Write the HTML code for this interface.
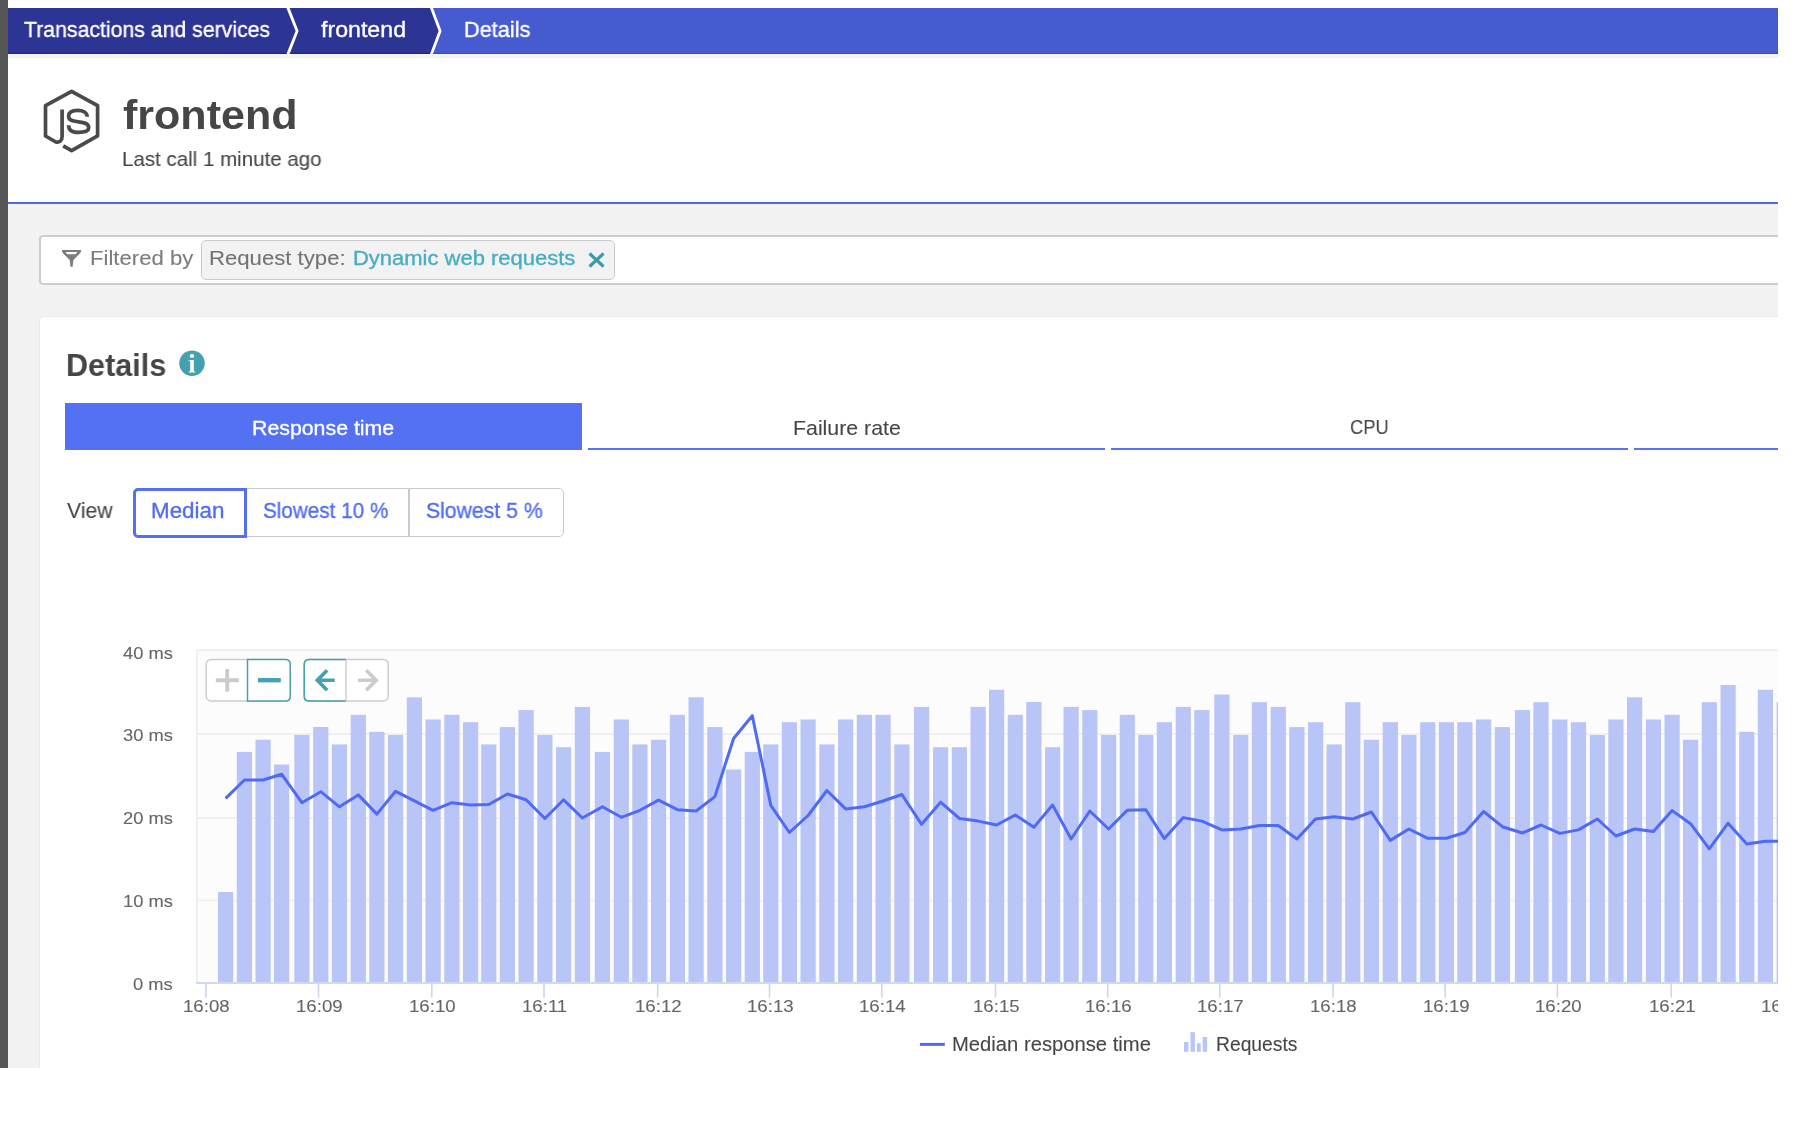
<!DOCTYPE html>
<html><head><meta charset="utf-8"><title>frontend - Details</title>
<style>
html,body{margin:0;padding:0;background:#fff;}
#root{position:relative;width:1800px;height:1142px;overflow:hidden;background:#fff;font-family:"Liberation Sans", sans-serif;}
#clip{position:absolute;left:0;top:0;width:1778px;height:1068px;overflow:hidden;background:#fff;}
.abs{position:absolute;}
.t{position:absolute;white-space:nowrap;font-family:"Liberation Sans", sans-serif;transform-origin:0 0;will-change:transform;-webkit-text-stroke-width:0.35px;}
.r{text-align:right;}
.c{text-align:center;}
</style></head><body><div id="root"><div id="clip">
<div class="abs" style="left:0;top:0;width:8px;height:1068px;background:#555;z-index:5"></div>
<svg class="abs" style="left:0;top:0" width="1800" height="60" viewBox="0 0 1800 60">
<polygon points="8,8 286.4,8 295.6,31 286.4,54 8,54" fill="#2d3594"/>
<polygon points="289.6,8 430,8 438.6,31 430,54 289.6,54 298.6,31" fill="#2d3594"/>
<polygon points="433,8 1800,8 1800,54 433,54 441.6,31" fill="#465bd0"/>
<path d="M8,53.5 L286.6,53.5 M289.8,53.5 L430.2,53.5" stroke="#1e2689" stroke-width="1.2"/>
<path d="M433.2,53.5 L1800,53.5" stroke="#3447cc" stroke-width="1.2"/>
</svg>
<div class="t" style="left:23.80px;top:18.54px;font-size:22.2px;line-height:22.2px;color:#fff;font-weight:400;transform:scaleX(0.9580);">Transactions and services</div><div class="t" style="left:321.20px;top:18.54px;font-size:22.2px;line-height:22.2px;color:#fff;font-weight:400;transform:scaleX(1.0444);">frontend</div><div class="t" style="left:464.22px;top:18.54px;font-size:22.2px;line-height:22.2px;color:#fff;font-weight:400;transform:scaleX(0.9791);">Details</div><div class="abs" style="left:8px;top:54px;width:1800px;height:4px;background:linear-gradient(#f6f6f6,#f1f1f1)"></div>
<svg class="abs" style="left:38px;top:84px" width="68" height="74" viewBox="38 84 68 74">
<path d="M62.1,109.6 L62.1,136.5 C62.1,140.8 59.5,142.8 55.8,142 L45.5,136 L45.5,105.7 L71.6,91.3 L97.6,105.7 L97.6,135.8 L71.6,150.6 L63.2,145.9" fill="none" stroke="#4a4a4a" stroke-width="3.7" stroke-linejoin="round"/>
<path d="M87.2,116.8 C87.2,112.5 83,110.4 77.8,110.4 C72.5,110.4 68.6,112.2 68.6,116.3 C68.6,120.5 73,121 78.5,121.8 C84.5,122.6 88.7,123.5 88.7,127.8 C88.7,131.6 84,132.4 78.3,132.4 C72,132.4 68.6,130.5 68.6,125.2" fill="none" stroke="#4a4a4a" stroke-width="3.7"/>
</svg>
<div class="t" style="left:122.80px;top:95.36px;font-size:41px;line-height:41px;color:#454646;font-weight:700;transform:scaleX(1.0497);-webkit-text-stroke-width:0;">frontend</div><div class="t" style="left:121.81px;top:149.21px;font-size:20.7px;line-height:20.7px;color:#454646;font-weight:400;transform:scaleX(0.9915);-webkit-text-stroke-width:0.1px;">Last call 1 minute ago</div><div class="abs" style="left:8px;top:204px;width:1800px;height:900px;background:#f2f2f2"></div>
<div class="abs" style="left:8px;top:202px;width:1800px;height:2px;background:#5568d8"></div>
<div class="abs" style="left:39px;top:235px;width:1800px;height:50px;box-sizing:border-box;border:2px solid #cdcdcd;border-radius:4px;background:#fff"></div>
<svg class="abs" style="left:60px;top:248px" width="24" height="22" viewBox="60 248 24 22">
<path d="M62,250 L81,250 L81,251.6 C80.3,253.6 75.5,257.8 73.8,259.6 C73.1,261 72.9,264.5 72.8,266.2 Q71.6,267.8 70.4,266.2 C70.3,264.5 70.1,261 69.4,259.6 C67.7,257.8 62.7,253.6 62,251.6 Z" fill="#7d7d7d"/>
<path d="M65.8,252.1 L77.1,252.1 C76.7,253.4 76,254.3 75,254.3 L67.9,254.3 C66.9,254.3 66.2,253.4 65.8,252.1 Z" fill="#fff"/>
</svg>
<div class="t" style="left:90.42px;top:248.48px;font-size:20.5px;line-height:20.5px;color:#7b7b7b;font-weight:400;transform:scaleX(1.0789);-webkit-text-stroke-width:0.1px;">Filtered by</div><div class="abs" style="left:201px;top:240px;width:413.5px;height:39.5px;box-sizing:border-box;border:1.5px solid #c9c9c9;border-radius:5px;background:#f2f2f2"></div>
<div class="t" style="left:208.82px;top:248.48px;font-size:20.5px;line-height:20.5px;color:#737373;font-weight:400;transform:scaleX(1.0798);-webkit-text-stroke-width:0.1px;">Request type:</div><div class="t" style="left:352.53px;top:248.48px;font-size:20.5px;line-height:20.5px;color:#47adc4;font-weight:400;transform:scaleX(1.0718);">Dynamic web requests</div><svg class="abs" style="left:585px;top:250px" width="22" height="20" viewBox="585 250 22 20">
<path d="M589.5,253.5 L603.5,266.5 M603.5,253.5 L589.5,266.5" stroke="#3a9bab" stroke-width="3.2" fill="none"/>
</svg>
<div class="abs" style="left:39px;top:316px;width:1800px;height:900px;box-sizing:border-box;border:1.5px solid #e8e8e8;border-radius:4px;background:#fff"></div>
<div class="t" style="left:66.14px;top:348.56px;font-size:32px;line-height:32px;color:#454646;font-weight:700;transform:scaleX(0.9553);-webkit-text-stroke-width:0;">Details</div><svg class="abs" style="left:176px;top:347px" width="32" height="32" viewBox="176 347 32 32">
<circle cx="192" cy="363.3" r="12.75" fill="#45a1b1"/>
<circle cx="192" cy="356" r="2.1" fill="#fff"/>
<path d="M188.6,360 L193.8,360 L193.8,370.3 Q194.2,371.5 195.8,372.6 L188.2,372.6 Q189.8,371.5 190.2,370.3 L190.2,361.8 Q190,360.7 188.6,360.4 Z" fill="#fff"/>
</svg>
<div class="abs" style="left:65px;top:403px;width:517px;height:47px;background:#5571f3"></div>
<div class="abs" style="left:588px;top:448px;width:517px;height:2px;background:#5a73f2"></div>
<div class="abs" style="left:1111px;top:448px;width:517px;height:2px;background:#5a73f2"></div>
<div class="abs" style="left:1634px;top:448px;width:517px;height:2px;background:#5a73f2"></div>
<div class="t" style="left:252.18px;top:416.75px;font-size:21px;line-height:21px;color:#fff;font-weight:400;transform:scaleX(1.0151);">Response time</div><div class="t" style="left:792.78px;top:416.65px;font-size:21px;line-height:21px;color:#454646;font-weight:400;transform:scaleX(1.0152);-webkit-text-stroke-width:0.1px;">Failure rate</div><div class="t" style="left:1350.40px;top:416.36px;font-size:21px;line-height:21px;color:#454646;font-weight:400;transform:scaleX(0.8705);-webkit-text-stroke-width:0.1px;">CPU</div><div class="t" style="left:66.60px;top:500.63px;font-size:21.5px;line-height:21.5px;color:#454646;font-weight:400;transform:scaleX(0.9851);-webkit-text-stroke-width:0.1px;">View</div><div class="abs" style="left:132.5px;top:487.5px;width:431px;height:49.5px;box-sizing:border-box;border:1.5px solid #cacaca;border-radius:5px;background:#fff"></div>
<div class="abs" style="left:408px;top:488px;width:1.5px;height:48.5px;background:#cacaca"></div>
<div class="abs" style="left:132.5px;top:487.5px;width:114.5px;height:50px;box-sizing:border-box;border:3px solid #5470f0;border-radius:5px 0 0 5px"></div>
<div class="t" style="left:151.16px;top:500.83px;font-size:21.5px;line-height:21.5px;color:#526df0;font-weight:400;transform:scaleX(1.0406);">Median</div><div class="t" style="left:262.64px;top:500.83px;font-size:21.5px;line-height:21.5px;color:#526df0;font-weight:400;transform:scaleX(0.9620);">Slowest 10 %</div><div class="t" style="left:425.91px;top:500.83px;font-size:21.5px;line-height:21.5px;color:#526df0;font-weight:400;transform:scaleX(0.9863);">Slowest 5 %</div><svg class="abs" style="left:0;top:0" width="1778" height="1142" viewBox="0 0 1778 1142">
<rect x="196.3" y="649.7" width="1600" height="333" fill="#fcfcfc"/>
<path d="M197,983 L197,650.2 L1800,650.2" fill="none" stroke="#f0f0f0" stroke-width="2"/>
<line x1="197" y1="733.9" x2="1800" y2="733.9" stroke="#f0f0f0" stroke-width="2"/>
<line x1="197" y1="818.1" x2="1800" y2="818.1" stroke="#f0f0f0" stroke-width="2"/>
<line x1="197" y1="900.6" x2="1800" y2="900.6" stroke="#f0f0f0" stroke-width="2"/>
<rect x="218.00" y="892" width="15.2" height="90.7" fill="#b9c4f7"/>
<rect x="236.80" y="751.9" width="15.2" height="230.8" fill="#b9c4f7"/>
<rect x="255.50" y="739.7" width="15.2" height="243.0" fill="#b9c4f7"/>
<rect x="274.00" y="764.5" width="15.2" height="218.2" fill="#b9c4f7"/>
<rect x="294.30" y="735" width="15.2" height="247.7" fill="#b9c4f7"/>
<rect x="313.20" y="727" width="15.2" height="255.7" fill="#b9c4f7"/>
<rect x="331.80" y="744.4" width="15.2" height="238.3" fill="#b9c4f7"/>
<rect x="350.70" y="714.8" width="15.2" height="267.9" fill="#b9c4f7"/>
<rect x="369.30" y="731.8" width="15.2" height="250.9" fill="#b9c4f7"/>
<rect x="388.00" y="735" width="15.2" height="247.7" fill="#b9c4f7"/>
<rect x="406.80" y="697.3" width="15.2" height="285.4" fill="#b9c4f7"/>
<rect x="425.50" y="719.5" width="15.2" height="263.2" fill="#b9c4f7"/>
<rect x="444.30" y="714.8" width="15.2" height="267.9" fill="#b9c4f7"/>
<rect x="463.00" y="722.2" width="15.2" height="260.5" fill="#b9c4f7"/>
<rect x="481.20" y="744.4" width="15.2" height="238.3" fill="#b9c4f7"/>
<rect x="499.80" y="727.1" width="15.2" height="255.6" fill="#b9c4f7"/>
<rect x="518.50" y="710.1" width="15.2" height="272.6" fill="#b9c4f7"/>
<rect x="537.30" y="735" width="15.2" height="247.7" fill="#b9c4f7"/>
<rect x="556.00" y="747.2" width="15.2" height="235.5" fill="#b9c4f7"/>
<rect x="574.80" y="706.9" width="15.2" height="275.8" fill="#b9c4f7"/>
<rect x="594.80" y="751.9" width="15.2" height="230.8" fill="#b9c4f7"/>
<rect x="613.70" y="719.5" width="15.2" height="263.2" fill="#b9c4f7"/>
<rect x="632.30" y="744.4" width="15.2" height="238.3" fill="#b9c4f7"/>
<rect x="651.00" y="739.7" width="15.2" height="243.0" fill="#b9c4f7"/>
<rect x="669.80" y="714.8" width="15.2" height="267.9" fill="#b9c4f7"/>
<rect x="688.50" y="697.3" width="15.2" height="285.4" fill="#b9c4f7"/>
<rect x="707.30" y="727.1" width="15.2" height="255.6" fill="#b9c4f7"/>
<rect x="726.00" y="769.5" width="15.2" height="213.2" fill="#b9c4f7"/>
<rect x="744.70" y="751.9" width="15.2" height="230.8" fill="#b9c4f7"/>
<rect x="763.20" y="744.4" width="15.2" height="238.3" fill="#b9c4f7"/>
<rect x="781.80" y="722.2" width="15.2" height="260.5" fill="#b9c4f7"/>
<rect x="800.50" y="719.5" width="15.2" height="263.2" fill="#b9c4f7"/>
<rect x="819.30" y="744.4" width="15.2" height="238.3" fill="#b9c4f7"/>
<rect x="838.00" y="719.5" width="15.2" height="263.2" fill="#b9c4f7"/>
<rect x="856.80" y="714.8" width="15.2" height="267.9" fill="#b9c4f7"/>
<rect x="875.50" y="714.8" width="15.2" height="267.9" fill="#b9c4f7"/>
<rect x="894.30" y="744.4" width="15.2" height="238.3" fill="#b9c4f7"/>
<rect x="914.00" y="706.9" width="15.2" height="275.8" fill="#b9c4f7"/>
<rect x="933.00" y="747.2" width="15.2" height="235.5" fill="#b9c4f7"/>
<rect x="951.80" y="747.2" width="15.2" height="235.5" fill="#b9c4f7"/>
<rect x="970.50" y="706.9" width="15.2" height="275.8" fill="#b9c4f7"/>
<rect x="989.00" y="689.8" width="15.2" height="292.9" fill="#b9c4f7"/>
<rect x="1007.70" y="714.8" width="15.2" height="267.9" fill="#b9c4f7"/>
<rect x="1026.30" y="702" width="15.2" height="280.7" fill="#b9c4f7"/>
<rect x="1045.00" y="747.2" width="15.2" height="235.5" fill="#b9c4f7"/>
<rect x="1063.50" y="706.9" width="15.2" height="275.8" fill="#b9c4f7"/>
<rect x="1082.20" y="710.1" width="15.2" height="272.6" fill="#b9c4f7"/>
<rect x="1101.00" y="735" width="15.2" height="247.7" fill="#b9c4f7"/>
<rect x="1119.70" y="714.8" width="15.2" height="267.9" fill="#b9c4f7"/>
<rect x="1138.20" y="735" width="15.2" height="247.7" fill="#b9c4f7"/>
<rect x="1156.80" y="722.2" width="15.2" height="260.5" fill="#b9c4f7"/>
<rect x="1175.70" y="706.9" width="15.2" height="275.8" fill="#b9c4f7"/>
<rect x="1194.30" y="710.1" width="15.2" height="272.6" fill="#b9c4f7"/>
<rect x="1214.30" y="694.5" width="15.2" height="288.2" fill="#b9c4f7"/>
<rect x="1233.20" y="735" width="15.2" height="247.7" fill="#b9c4f7"/>
<rect x="1251.80" y="702.2" width="15.2" height="280.5" fill="#b9c4f7"/>
<rect x="1270.70" y="706.9" width="15.2" height="275.8" fill="#b9c4f7"/>
<rect x="1289.30" y="727.1" width="15.2" height="255.6" fill="#b9c4f7"/>
<rect x="1308.00" y="722.2" width="15.2" height="260.5" fill="#b9c4f7"/>
<rect x="1326.50" y="744.4" width="15.2" height="238.3" fill="#b9c4f7"/>
<rect x="1345.20" y="702.2" width="15.2" height="280.5" fill="#b9c4f7"/>
<rect x="1363.80" y="739.7" width="15.2" height="243.0" fill="#b9c4f7"/>
<rect x="1382.70" y="722.2" width="15.2" height="260.5" fill="#b9c4f7"/>
<rect x="1401.30" y="735" width="15.2" height="247.7" fill="#b9c4f7"/>
<rect x="1420.20" y="722.2" width="15.2" height="260.5" fill="#b9c4f7"/>
<rect x="1438.80" y="722.2" width="15.2" height="260.5" fill="#b9c4f7"/>
<rect x="1457.30" y="722.2" width="15.2" height="260.5" fill="#b9c4f7"/>
<rect x="1476.00" y="719.5" width="15.2" height="263.2" fill="#b9c4f7"/>
<rect x="1494.80" y="727.1" width="15.2" height="255.6" fill="#b9c4f7"/>
<rect x="1514.90" y="710.1" width="15.2" height="272.6" fill="#b9c4f7"/>
<rect x="1533.40" y="702.2" width="15.2" height="280.5" fill="#b9c4f7"/>
<rect x="1552.20" y="719.5" width="15.2" height="263.2" fill="#b9c4f7"/>
<rect x="1570.90" y="722.2" width="15.2" height="260.5" fill="#b9c4f7"/>
<rect x="1589.70" y="735" width="15.2" height="247.7" fill="#b9c4f7"/>
<rect x="1608.30" y="719.5" width="15.2" height="263.2" fill="#b9c4f7"/>
<rect x="1627.00" y="697.3" width="15.2" height="285.4" fill="#b9c4f7"/>
<rect x="1645.80" y="719.5" width="15.2" height="263.2" fill="#b9c4f7"/>
<rect x="1664.50" y="714.8" width="15.2" height="267.9" fill="#b9c4f7"/>
<rect x="1683.00" y="739.7" width="15.2" height="243.0" fill="#b9c4f7"/>
<rect x="1701.70" y="702.2" width="15.2" height="280.5" fill="#b9c4f7"/>
<rect x="1720.50" y="685" width="15.2" height="297.7" fill="#b9c4f7"/>
<rect x="1739.20" y="731.8" width="15.2" height="250.9" fill="#b9c4f7"/>
<rect x="1757.80" y="689.8" width="15.2" height="292.9" fill="#b9c4f7"/>
<rect x="1776.60" y="702.2" width="15.2" height="280.5" fill="#b9c4f7"/>
<polyline points="225.60,798.4 244.40,780 263.10,780 281.60,774.2 301.90,802.7 320.80,791.7 339.40,806.8 358.30,794.9 376.90,814.1 395.60,791.3 414.40,800.8 433.10,810.3 451.90,802.7 470.60,805 488.80,804.5 507.40,794 526.10,799.8 544.90,818.5 563.60,799.8 582.40,818 602.40,806.8 621.30,817.3 639.90,810.3 658.60,800.1 677.40,809.7 696.10,811 714.90,796.6 733.60,738.5 752.30,715.7 770.80,805.4 789.40,832.5 808.10,815.5 826.90,790.5 845.60,808.9 864.40,806.8 883.10,801 901.90,794.5 921.60,824.3 940.60,802.2 959.40,818.5 978.10,821.1 996.60,825 1015.30,815 1033.90,827.2 1052.60,805 1071.10,839 1089.80,811 1108.60,829 1127.30,810.3 1145.80,809.7 1164.40,838.6 1183.30,817.6 1201.90,821.1 1221.90,829.9 1240.80,829 1259.40,825.5 1278.30,825.5 1296.90,839 1315.60,819 1334.10,816.7 1352.80,819 1371.40,812 1390.30,840.4 1408.90,829 1427.80,838.3 1446.40,838.3 1464.90,832.5 1483.60,811.5 1502.40,826.7 1522.50,833 1541.00,825 1559.80,833.4 1578.50,829.9 1597.30,819 1615.90,836 1634.60,829 1653.40,831.6 1672.10,810.6 1690.60,823.7 1709.30,848.8 1728.10,823.2 1746.80,843.9 1765.40,841.3 1784.20,841.3" fill="none" stroke="#4f6af4" stroke-width="3" stroke-linejoin="round"/>
<line x1="196" y1="983" x2="1800" y2="983" stroke="#d2d8f0" stroke-width="1.8"/>
<line x1="206.0" y1="983" x2="206.0" y2="997.6" stroke="#cfd4ef" stroke-width="1.6"/>
<line x1="318.5" y1="983" x2="318.5" y2="997.6" stroke="#cfd4ef" stroke-width="1.6"/>
<line x1="431.8" y1="983" x2="431.8" y2="997.6" stroke="#cfd4ef" stroke-width="1.6"/>
<line x1="544.0" y1="983" x2="544.0" y2="997.6" stroke="#cfd4ef" stroke-width="1.6"/>
<line x1="657.7" y1="983" x2="657.7" y2="997.6" stroke="#cfd4ef" stroke-width="1.6"/>
<line x1="769.5" y1="983" x2="769.5" y2="997.6" stroke="#cfd4ef" stroke-width="1.6"/>
<line x1="881.8" y1="983" x2="881.8" y2="997.6" stroke="#cfd4ef" stroke-width="1.6"/>
<line x1="995.5" y1="983" x2="995.5" y2="997.6" stroke="#cfd4ef" stroke-width="1.6"/>
<line x1="1107.7" y1="983" x2="1107.7" y2="997.6" stroke="#cfd4ef" stroke-width="1.6"/>
<line x1="1219.8" y1="983" x2="1219.8" y2="997.6" stroke="#cfd4ef" stroke-width="1.6"/>
<line x1="1333.1" y1="983" x2="1333.1" y2="997.6" stroke="#cfd4ef" stroke-width="1.6"/>
<line x1="1445.2" y1="983" x2="1445.2" y2="997.6" stroke="#cfd4ef" stroke-width="1.6"/>
<line x1="1557.4" y1="983" x2="1557.4" y2="997.6" stroke="#cfd4ef" stroke-width="1.6"/>
<line x1="1671.2" y1="983" x2="1671.2" y2="997.6" stroke="#cfd4ef" stroke-width="1.6"/>
<rect x="206.2" y="659.4" width="84" height="41.6" rx="5" fill="#fff" stroke="#cccccc" stroke-width="1.5"/>
<path d="M247.5,659.4 L285.5,659.4 Q290.2,659.4 290.2,664.2 L290.2,696.2 Q290.2,701 285.5,701 L247.5,701 Z" fill="#fff" stroke="#48a0af" stroke-width="1.5"/>
<path d="M227.2,669 L227.2,691.7 M215.8,680.2 L238.9,680.2" stroke="#cbcbcb" stroke-width="3.9"/>
<path d="M258,680.2 L280.8,680.2" stroke="#45a0af" stroke-width="4.4"/>
<rect x="304.2" y="659.4" width="84" height="41.6" rx="5" fill="#fff" stroke="#cccccc" stroke-width="1.5"/>
<path d="M346,659.4 L309,659.4 Q304.2,659.4 304.2,664.2 L304.2,696.2 Q304.2,701 309,701 L346,701" fill="none" stroke="#48a0af" stroke-width="1.5"/>
<line x1="346" y1="659.4" x2="346" y2="701" stroke="#cccccc" stroke-width="1.5"/>
<path d="M334.7,680.2 L318.5,680.2 M327.2,670.2 L317.3,680.2 L327.2,690.3" fill="none" stroke="#45a0af" stroke-width="3.6"/>
<path d="M358,680.2 L375,680.2 M366.2,670.2 L376.2,680.2 L366.2,690.3" fill="none" stroke="#cbcbcb" stroke-width="3.6"/>
<line x1="920" y1="1044.4" x2="944.8" y2="1044.4" stroke="#4f6af4" stroke-width="3"/>
<rect x="1184" y="1042" width="4.5" height="9.8" fill="#b9c4f7"/>
<rect x="1190.5" y="1032.2" width="4.4" height="19.6" fill="#b9c4f7"/>
<rect x="1196.9" y="1043.2" width="3.9" height="8.6" fill="#b9c4f7"/>
<rect x="1202.7" y="1037" width="4.4" height="14.8" fill="#b9c4f7"/>
</svg>
<div class="t" style="left:123.15px;top:644.56px;font-size:16.5px;line-height:16.5px;color:#666;font-weight:400;transform:scaleX(1.1100);-webkit-text-stroke-width:0.1px;">40 ms</div><div class="t" style="left:123.15px;top:727.26px;font-size:16.5px;line-height:16.5px;color:#666;font-weight:400;transform:scaleX(1.1100);-webkit-text-stroke-width:0.1px;">30 ms</div><div class="t" style="left:123.15px;top:809.86px;font-size:16.5px;line-height:16.5px;color:#666;font-weight:400;transform:scaleX(1.1100);-webkit-text-stroke-width:0.1px;">20 ms</div><div class="t" style="left:123.15px;top:892.76px;font-size:16.5px;line-height:16.5px;color:#666;font-weight:400;transform:scaleX(1.1100);-webkit-text-stroke-width:0.1px;">10 ms</div><div class="t" style="left:133.14px;top:976.26px;font-size:16.5px;line-height:16.5px;color:#666;font-weight:400;transform:scaleX(1.1100);-webkit-text-stroke-width:0.1px;">0 ms</div><div class="t" style="left:183.33px;top:998.80px;font-size:16.8px;line-height:16.8px;color:#666;font-weight:400;transform:scaleX(1.1100);-webkit-text-stroke-width:0.1px;">16:08</div><div class="t" style="left:295.83px;top:998.80px;font-size:16.8px;line-height:16.8px;color:#666;font-weight:400;transform:scaleX(1.1100);-webkit-text-stroke-width:0.1px;">16:09</div><div class="t" style="left:409.13px;top:998.80px;font-size:16.8px;line-height:16.8px;color:#666;font-weight:400;transform:scaleX(1.1100);-webkit-text-stroke-width:0.1px;">16:10</div><div class="t" style="left:521.89px;top:998.80px;font-size:16.8px;line-height:16.8px;color:#666;font-weight:400;transform:scaleX(1.1100);-webkit-text-stroke-width:0.1px;">16:11</div><div class="t" style="left:635.04px;top:998.80px;font-size:16.8px;line-height:16.8px;color:#666;font-weight:400;transform:scaleX(1.1100);-webkit-text-stroke-width:0.1px;">16:12</div><div class="t" style="left:746.84px;top:998.80px;font-size:16.8px;line-height:16.8px;color:#666;font-weight:400;transform:scaleX(1.1100);-webkit-text-stroke-width:0.1px;">16:13</div><div class="t" style="left:859.13px;top:998.80px;font-size:16.8px;line-height:16.8px;color:#666;font-weight:400;transform:scaleX(1.1100);-webkit-text-stroke-width:0.1px;">16:14</div><div class="t" style="left:972.84px;top:998.80px;font-size:16.8px;line-height:16.8px;color:#666;font-weight:400;transform:scaleX(1.1100);-webkit-text-stroke-width:0.1px;">16:15</div><div class="t" style="left:1085.04px;top:998.80px;font-size:16.8px;line-height:16.8px;color:#666;font-weight:400;transform:scaleX(1.1100);-webkit-text-stroke-width:0.1px;">16:16</div><div class="t" style="left:1197.13px;top:998.80px;font-size:16.8px;line-height:16.8px;color:#666;font-weight:400;transform:scaleX(1.1100);-webkit-text-stroke-width:0.1px;">16:17</div><div class="t" style="left:1310.43px;top:998.80px;font-size:16.8px;line-height:16.8px;color:#666;font-weight:400;transform:scaleX(1.1100);-webkit-text-stroke-width:0.1px;">16:18</div><div class="t" style="left:1422.54px;top:998.80px;font-size:16.8px;line-height:16.8px;color:#666;font-weight:400;transform:scaleX(1.1100);-webkit-text-stroke-width:0.1px;">16:19</div><div class="t" style="left:1534.74px;top:998.80px;font-size:16.8px;line-height:16.8px;color:#666;font-weight:400;transform:scaleX(1.1100);-webkit-text-stroke-width:0.1px;">16:20</div><div class="t" style="left:1648.54px;top:998.80px;font-size:16.8px;line-height:16.8px;color:#666;font-weight:400;transform:scaleX(1.1100);-webkit-text-stroke-width:0.1px;">16:21</div><div class="t" style="left:1760.74px;top:998.80px;font-size:16.8px;line-height:16.8px;color:#666;font-weight:400;transform:scaleX(1.1100);-webkit-text-stroke-width:0.1px;">16:22</div><div class="t" style="left:952.45px;top:1034.99px;font-size:19.3px;line-height:19.3px;color:#454646;font-weight:400;transform:scaleX(1.0487);-webkit-text-stroke-width:0.1px;">Median response time</div><div class="t" style="left:1216.21px;top:1034.99px;font-size:19.3px;line-height:19.3px;color:#454646;font-weight:400;transform:scaleX(0.9950);-webkit-text-stroke-width:0.1px;">Requests</div></div></div></body></html>
